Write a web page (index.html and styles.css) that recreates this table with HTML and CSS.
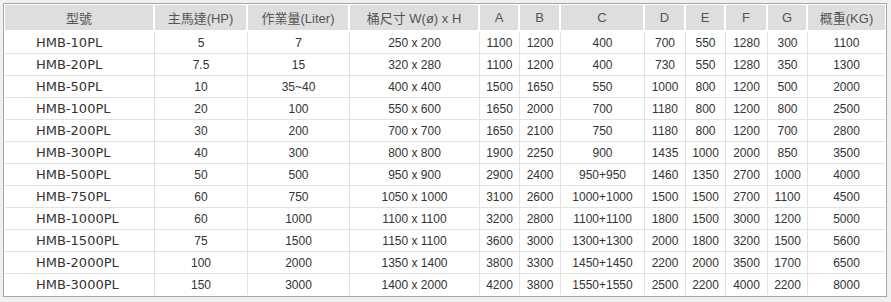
FILE: index.html
```html
<!DOCTYPE html>
<html lang="zh-Hant">
<head>
<meta charset="utf-8">
<title>規格表</title>
<link rel="stylesheet" href="styles.css">
</head>
<body>
<div class="frame">
<table class="spec">
<colgroup>
<col class="c-model"><col class="c-hp"><col class="c-liter"><col class="c-size">
<col class="c-a"><col class="c-b"><col class="c-c"><col class="c-d">
<col class="c-e"><col class="c-f"><col class="c-g"><col class="c-kg">
</colgroup>
<thead>
<tr><th>型號</th><th>主馬達(HP)</th><th>作業量(Liter)</th><th>桶尺寸 W(ø) x H</th><th>A</th><th>B</th><th>C</th><th>D</th><th>E</th><th>F</th><th>G</th><th class="last">概重(KG)</th></tr>
</thead>
<tbody>
<tr><td class="model">HMB-10PL</td><td>5</td><td>7</td><td>250 x 200</td><td>1100</td><td>1200</td><td>400</td><td>700</td><td>550</td><td>1280</td><td>300</td><td class="last">1100</td></tr>
<tr><td class="model">HMB-20PL</td><td>7.5</td><td>15</td><td>320 x 280</td><td>1100</td><td>1200</td><td>400</td><td>730</td><td>550</td><td>1280</td><td>350</td><td class="last">1300</td></tr>
<tr><td class="model">HMB-50PL</td><td>10</td><td>35~40</td><td>400 x 400</td><td>1500</td><td>1650</td><td>550</td><td>1000</td><td>800</td><td>1200</td><td>500</td><td class="last">2000</td></tr>
<tr><td class="model">HMB-100PL</td><td>20</td><td>100</td><td>550 x 600</td><td>1650</td><td>2000</td><td>700</td><td>1180</td><td>800</td><td>1200</td><td>800</td><td class="last">2500</td></tr>
<tr><td class="model">HMB-200PL</td><td>30</td><td>200</td><td>700 x 700</td><td>1650</td><td>2100</td><td>750</td><td>1180</td><td>800</td><td>1200</td><td>700</td><td class="last">2800</td></tr>
<tr><td class="model">HMB-300PL</td><td>40</td><td>300</td><td>800 x 800</td><td>1900</td><td>2250</td><td>900</td><td>1435</td><td>1000</td><td>2000</td><td>850</td><td class="last">3500</td></tr>
<tr><td class="model">HMB-500PL</td><td>50</td><td>500</td><td>950 x 900</td><td>2900</td><td>2400</td><td>950+950</td><td>1460</td><td>1350</td><td>2700</td><td>1000</td><td class="last">4000</td></tr>
<tr><td class="model">HMB-750PL</td><td>60</td><td>750</td><td>1050 x 1000</td><td>3100</td><td>2600</td><td>1000+1000</td><td>1500</td><td>1500</td><td>2700</td><td>1100</td><td class="last">4500</td></tr>
<tr><td class="model">HMB-1000PL</td><td>60</td><td>1000</td><td>1100 x 1100</td><td>3200</td><td>2800</td><td>1100+1100</td><td>1800</td><td>1500</td><td>3000</td><td>1200</td><td class="last">5000</td></tr>
<tr><td class="model">HMB-1500PL</td><td>75</td><td>1500</td><td>1150 x 1100</td><td>3600</td><td>3000</td><td>1300+1300</td><td>2000</td><td>1800</td><td>3200</td><td>1500</td><td class="last">5600</td></tr>
<tr><td class="model">HMB-2000PL</td><td>100</td><td>2000</td><td>1350 x 1400</td><td>3800</td><td>3300</td><td>1450+1450</td><td>2200</td><td>2000</td><td>3500</td><td>1700</td><td class="last">6500</td></tr>
<tr class="end"><td class="model">HMB-3000PL</td><td>150</td><td>3000</td><td>1400 x 2000</td><td>4200</td><td>3800</td><td>1550+1550</td><td>2500</td><td>2200</td><td>4000</td><td>2200</td><td class="last">8000</td></tr>
</tbody>
</table>
</div>
</body>
</html>
```
FILE: styles.css
```css
html, body {
  margin: 0;
  padding: 0;
  background: #f0f0f0;
}
body {
  padding: 3px;
  font-family: "Liberation Sans", Arial, "Noto Sans CJK TC", sans-serif;
}
.frame {
  width: 880px;
  border: 1px solid #a6a6a6;
  padding: 1px;
  background: #fff;
}
.spec {
  width: 880px;
  table-layout: fixed;
  border-collapse: separate;
  border-spacing: 0;
  color: #333;
}
.c-model { width: 150px; }
.c-hp { width: 93px; }
.c-liter { width: 102px; }
.c-size { width: 130px; }
.c-a { width: 40px; }
.c-b { width: 41px; }
.c-c { width: 84px; }
.c-d { width: 41px; }
.c-e { width: 40px; }
.c-f { width: 42px; }
.c-g { width: 40px; }
.c-kg { width: 77px; }
.spec th {
  height: 25px;
  padding: 0;
  background: #dedede;
  border-right: 2px solid #fff;
  border-bottom: 2px solid #fff;
  font-weight: normal;
  font-size: 13px;
  color: #555;
  text-align: center;
  vertical-align: middle;
  font-family: "Liberation Sans", Arial, "Noto Sans CJK TC", sans-serif;
}
.spec th.last { border-right: 0; }
.spec td {
  height: 21px;
  padding: 0;
  border-right: 1px solid #e2e2e2;
  border-bottom: 1px solid #e2e2e2;
  font-size: 12px;
  text-align: center;
  vertical-align: middle;
  white-space: nowrap;
}
.spec td.last { border-right: 0; }
.spec tr.end td { border-bottom: 0; }
.spec td.model {
  text-align: left;
  padding-left: 31px;
  font-family: "DejaVu Sans", Verdana, sans-serif;
  font-size: 13px;
  color: #333;
}
```
